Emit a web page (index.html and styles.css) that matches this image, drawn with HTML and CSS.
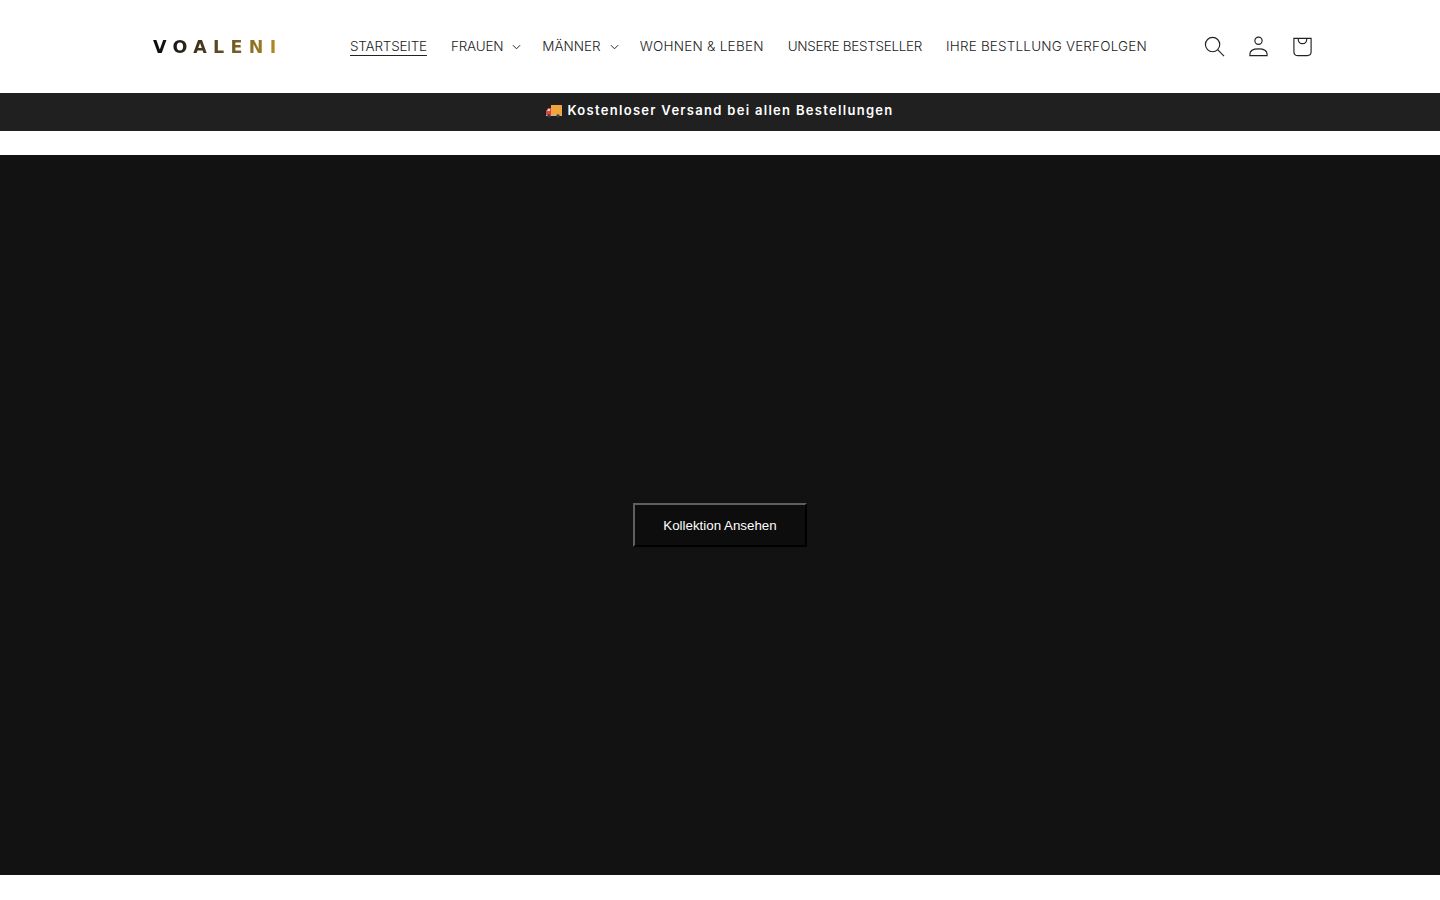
FILE: index.html
```html
<!DOCTYPE html>
<html lang="de">
<head>
	<meta charset="UTF-8">
	<title>VOALENI</title>
	<link rel="stylesheet" href="styles.css">
</head>
<body>
	<header class="header">
		<a class="logo" href="#"><span class="logo-text">VOALENI</span></a>
		<nav class="nav">
			<a class="nav-link nav-tight nav-current" href="#">STARTSEITE</a>
			<a class="nav-link nav-tight nav-drop" href="#">FRAUEN
				<svg class="chevron" viewBox="0 0 10 6"><path d="M1 1l4 4 4-4"/></svg>
			</a>
			<a class="nav-link nav-plain nav-drop" href="#">MÄNNER
				<svg class="chevron" viewBox="0 0 10 6"><path d="M1 1l4 4 4-4"/></svg>
			</a>
			<a class="nav-link nav-wide" href="#">WOHNEN &amp; LEBEN</a>
			<a class="nav-link nav-tighter" href="#">UNSERE BESTSELLER</a>
			<a class="nav-link" href="#">IHRE BESTLLUNG VERFOLGEN</a>
		</nav>
		<div class="icons">
			<a class="icon" href="#">
				<svg viewBox="0 0 22 22"><circle cx="9" cy="9" r="7.500"/><path d="M14.500 14.500l6.500 6.500"/></svg>
			</a>
			<a class="icon" href="#">
				<svg viewBox="0 0 22 22"><circle cx="11" cy="5" r="3.800"/><path d="M2 20.500v-1.500c0-3.500 3.500-5.500 9-5.500s9 2 9 5.500v1.500z"/></svg>
			</a>
			<a class="icon" href="#">
				<svg viewBox="0 0 22 22"><path d="M2 2.500h18v14c0 2.500-1.500 4-4 4H6c-2.500 0-4-1.500-4-4z"/><path d="M6.500 2.500c0 3.500 1.800 5.500 4.500 5.500s4.500-2 4.500-5.500"/></svg>
			</a>
		</div>
	</header>
	<div class="announce">
		<svg class="truck" viewBox="0 0 16 13">
			<rect x="5" y="0" width="11" height="10" fill="#f0a63c"/>
			<path d="M0 10V6l2-3h3v7z" fill="#e0453a"/>
			<path d="M1 6l1.400-2H4v2z" fill="#cfe3ee"/>
			<rect x="0" y="10" width="16" height="1" fill="#b9b9b9"/>
			<circle cx="3" cy="11" r="1.700" fill="#3a3a3a"/>
			<circle cx="12" cy="11" r="1.700" fill="#3a3a3a"/>
		</svg>
		<span>Kostenloser Versand bei allen Bestellungen</span>
	</div>
	<main class="hero">
		<button class="hero-btn" type="button">Kollektion Ansehen</button>
	</main>
</body>
</html>
```

FILE: styles.css
```css
*{
	margin:0;
	padding:0;
	box-sizing:border-box;
}
body{
	background:#fff;
	font-family:Inter,"Liberation Sans",sans-serif;
	color:#121212;
}
a{
	color:inherit;
	text-decoration:none;
}
.header{
	height:93px;
	padding:0 116px 0 153px;
	display:flex;
	align-items:center;
}
.logo{
	flex:none;
	width:185px;
}
.logo-text{
	display:inline-block;
	font-family:"DejaVu Sans",sans-serif;
	font-size:17.500px;
	font-weight:700;
	letter-spacing:6.300px;
	background:linear-gradient(90deg,#0c0c0c 0,#1c1a14 22px,#6b5526 75px,#b08a24 123px);
	-webkit-background-clip:text;
	background-clip:text;
	color:transparent;
}
.nav{
	flex:1;
	display:flex;
	align-items:center;
	padding-bottom:2px;
}
.nav-link{
	display:flex;
	align-items:center;
	padding:0 12px;
	font-size:13.500px;
	font-weight:300;
	letter-spacing:.18px;
	white-space:nowrap;
	color:#222;
}
.nav-tight{
	letter-spacing:-.2px;
}
.nav-tighter{
	letter-spacing:-.3px;
}
.nav-plain{
	letter-spacing:0;
}
.nav-wide{
	letter-spacing:.25px;
}
.nav-drop{
	padding-right:9px;
}
.nav-current{
	text-decoration:underline;
	text-underline-offset:4px;
	text-decoration-thickness:1px;
}
.chevron{
	width:9px;
	height:6px;
	margin-left:9px;
	margin-top:2px;
	fill:none;
	stroke:#222;
	stroke-width:1.100;
}
.icons{
	display:flex;
}
.icon{
	width:44px;
	height:44px;
	display:flex;
	align-items:center;
	justify-content:center;
}
.icon svg{
	width:21px;
	height:21px;
	fill:none;
	stroke:#222;
	stroke-width:1.200;
}
.announce{
	height:38px;
	padding-bottom:4px;
	background:#202020;
	color:#fff;
	display:flex;
	align-items:center;
	justify-content:center;
	gap:5px;
	font-size:13px;
	font-weight:600;
	letter-spacing:1.300px;
}
.truck{
	width:16px;
	height:13px;
	margin-top:3px;
}
.hero{
	height:720px;
	margin-top:24px;
	padding-top:20px;
	background:#121212;
	display:flex;
	align-items:center;
	justify-content:center;
}
.hero-btn{
	width:174px;
	height:44px;
	background:#0d0d0d;
	border:2px solid;
	border-color:#5f5f5f #000 #000 #5f5f5f;
	color:#fff;
	font-family:"Liberation Sans",Arial,sans-serif;
	font-size:13.333px;
	cursor:pointer;
}
```
